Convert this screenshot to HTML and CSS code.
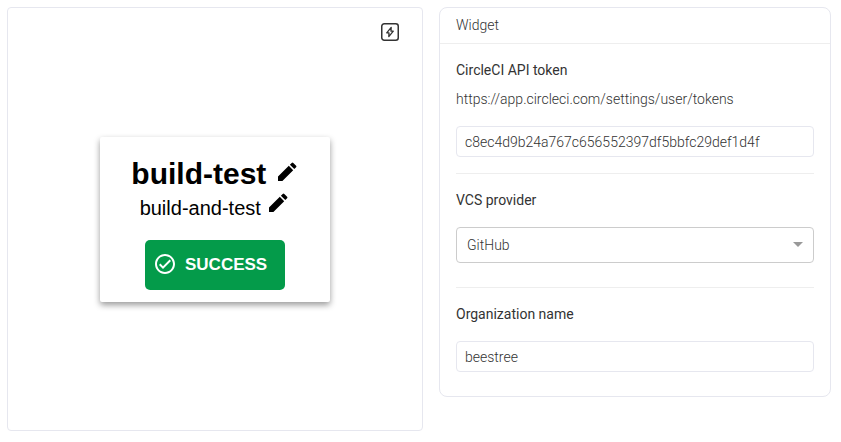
FILE: index.html
```html
<!DOCTYPE html>
<html lang="en">
<head>
    <meta charset="UTF-8">
    <meta name="viewport" content="width=device-width, initial-scale=1.0">
    <title>Widget</title>
    <link rel="stylesheet" href="styles.css">
</head>
<body>
    <main class="page">
        <section class="preview">
            <button class="action" type="button" aria-label="Actions">
                <svg width="20" height="20" viewBox="0 0 20 20" fill="none" stroke="#333" stroke-width="1.5" stroke-linejoin="round">
                    <rect x="1.75" y="1.75" width="16.5" height="16.5" rx="2.5"/>
                    <path d="M11.2 5.4 6.7 10.800h2.300L8.800 14.600l4.500-5.400h-2.300z" stroke-width="1.300"/>
                </svg>
            </button>
            <div class="build">
                <h1 class="build-title">build-test
                    <button class="edit" type="button" aria-label="Edit project">
                        <svg width="24" height="24" viewBox="0 0 24 24"><path d="M3 16.600V21h4.400L18.200 10.200l-4.400-4.400zM14.900 4.700l4.400 4.400 1.800-1.800q.8-.8 0-1.600L18.300 2.900q-.8-.8-1.600 0z"/></svg>
                    </button>
                </h1>
                <p class="build-job">build-and-test
                    <button class="edit" type="button" aria-label="Edit job">
                        <svg width="24" height="24" viewBox="0 0 24 24"><path d="M3 16.600V21h4.400L18.200 10.200l-4.400-4.400zM14.900 4.700l4.400 4.400 1.800-1.800q.8-.8 0-1.600L18.300 2.900q-.8-.8-1.600 0z"/></svg>
                    </button>
                </p>
                <button class="status" type="button">
                    <svg width="24" height="24" viewBox="0 0 24 24" fill="#fff"><path d="M12 2C6.500 2 2 6.500 2 12s4.500 10 10 10 10-4.500 10-10S17.500 2 12 2m0 18c-4.410 0-8-3.590-8-8s3.590-8 8-8 8 3.590 8 8-3.590 8-8 8m4.590-12.420L10 14.170l-2.590-2.580L6 13l4 4 8-8z"/></svg>
                    SUCCESS
                </button>
            </div>
        </section>

        <form class="panel">
            <h2 class="panel-header">Widget</h2>
            <div class="panel-body">
                <div class="field">
                    <label for="token">CircleCI API token</label>
                    <p class="hint">https://app.circleci.com/settings/user/tokens</p>
                    <input type="text" id="token" value="c8ec4d9b24a767c656552397df5bbfc29def1d4f">
                </div>
                <div class="field field-wide">
                    <label for="provider">VCS provider</label>
                    <div class="select">
                        <select id="provider">
                            <option>GitHub</option>
                            <option>Bitbucket</option>
                        </select>
                    </div>
                </div>
                <div class="field field-wide">
                    <label for="organization">Organization name</label>
                    <input type="text" id="organization" value="beestree">
                </div>
            </div>
        </form>
    </main>
</body>
</html>
```
FILE: styles.css
```css
* {
    box-sizing: border-box;
}
body {
    margin: 0;
    background-color: #fff;
    color: #333;
    font-family: Roboto, sans-serif;
    font-size: 14px;
    font-weight: 300;
    line-height: 20px;
}
button {
    border: none;
    cursor: pointer;
}
.page {
    display: grid;
    grid-template-columns: 52fr 49fr;
    gap: 16px;
    align-items: start;
    padding: 7px 10px 7px 7px;
}

/* preview */
.preview {
    position: relative;
    display: flex;
    align-items: center;
    justify-content: center;
    min-height: 424px;
    border: 1px solid #e6e7ef;
    border-radius: 4px;
}
.action {
    position: absolute;
    top: 14px;
    right: 22px;
    display: flex;
    padding: 0;
    background: none;
}
.build {
    width: 230px;
    padding: 20px 0 12px;
    border-radius: 2px;
    box-shadow: 0 3px 6px rgba(0, 0, 0, 0.4);
    color: #000;
    font-family: "Liberation Sans", Arial, sans-serif;
    font-weight: 400;
    text-align: center;
}
.build-title {
    margin: 0;
    font-size: 30px;
    line-height: 34px;
}
.build-job {
    margin: 0 0 20px;
    font-size: 20px;
    line-height: 24px;
}
.edit {
    display: inline-flex;
    padding: 0;
    background: none;
}
.status {
    display: flex;
    align-items: center;
    gap: 8px;
    width: 140px;
    height: 50px;
    margin: 0 auto;
    padding: 0 8px;
    border-radius: 5px;
    background-color: #049b4a;
    color: #fff;
    font-family: inherit;
    font-size: 17px;
    font-weight: bold;
}
.status svg {
    margin-bottom: 2px;
}

/* settings */
.panel {
    border: 1px solid #e6e7ef;
    border-radius: 8px;
}
.panel-header {
    margin: 0;
    padding: 7px 16px 8px;
    border-bottom: 1px solid #eee;
    font-size: 14px;
    font-weight: 300;
}
.panel-body {
    padding: 0 16px;
}
.field {
    padding: 16px 0;
}
.field-wide {
    padding-bottom: 24px;
}
.field + .field {
    border-top: 1px solid #eee;
}
.field label {
    display: block;
    margin-bottom: 17px;
    font-weight: 400;
}
.field .hint {
    margin: -8px 0 17px;
}
.field input {
    display: block;
    width: 100%;
    height: 31px;
    padding: 0 8px;
    border: 1px solid #e6e7ef;
    border-radius: 4px;
    background-color: #fff;
    color: #333;
    font: inherit;
}
.select {
    position: relative;
}
.select select {
    display: block;
    width: 100%;
    height: 36px;
    padding: 0 10px;
    border: 1px solid #ccc;
    border-radius: 4px;
    background-color: #fff;
    color: #333;
    font: inherit;
    appearance: none;
}
.select::after {
    content: "";
    position: absolute;
    top: 15px;
    right: 11px;
    border: 5px solid transparent;
    border-top-color: #999;
    border-bottom: none;
    pointer-events: none;
}
```
